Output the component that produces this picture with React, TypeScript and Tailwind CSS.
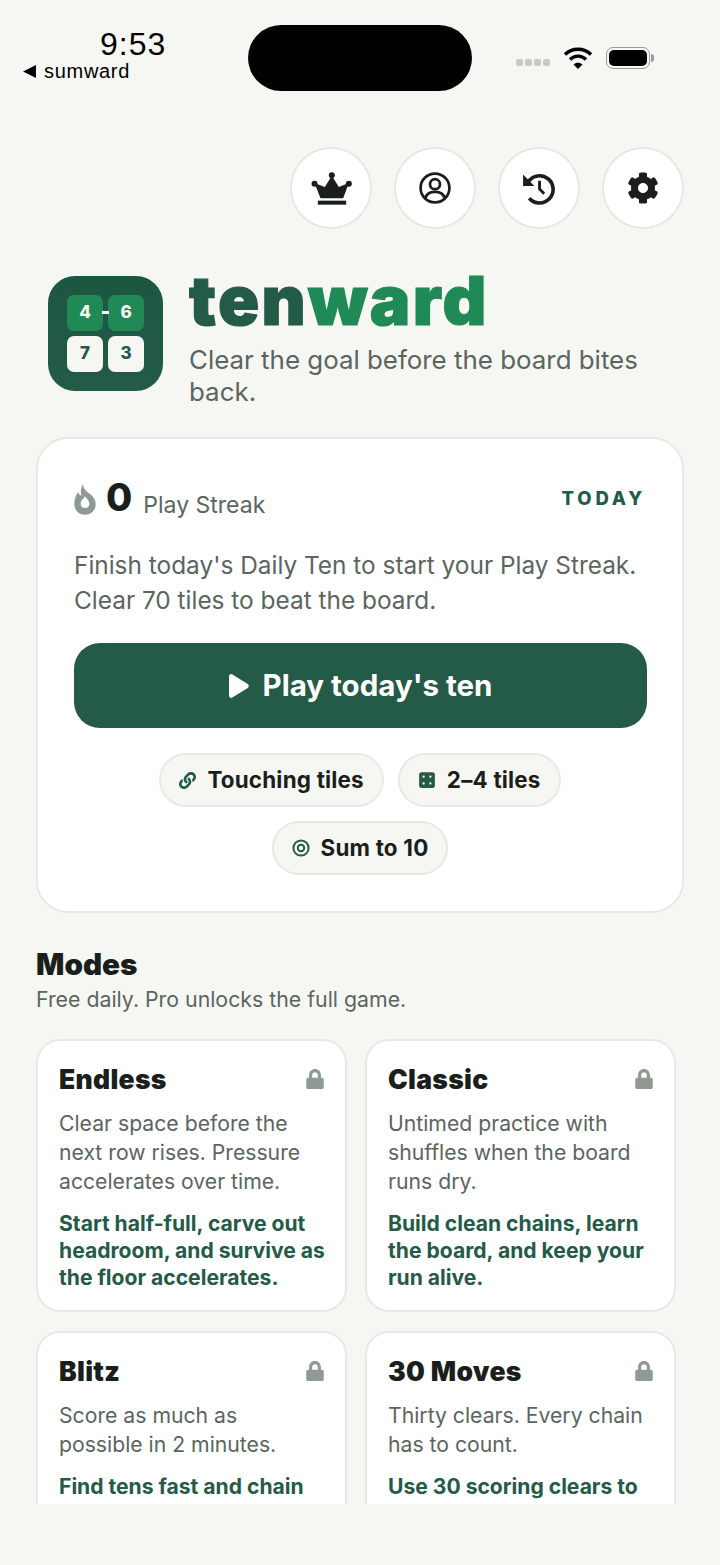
import React from "react";
import { FaCog, FaLock, FaLink, FaDiceFour } from "react-icons/fa";

const Crown = () => (
  <svg width="41" height="33" viewBox="30 33 122 99" fill="#1a1f1c">
    <circle cx="92" cy="43" r="9" />
    <circle cx="40" cy="68" r="9" />
    <circle cx="143" cy="68" r="9" />
    <path d="M92 44 L113 78 L143 66 L126 112 L58 112 L40 66 L71 78 Z" />
    <rect x="50" y="119" width="85" height="12" />
  </svg>
);
const Profile = () => (
  <svg width="32" height="32" viewBox="0 0 32 32" fill="none" stroke="#1a1f1c" strokeWidth="2.700">
    <circle cx="16" cy="16" r="14.400" />
    <circle cx="16" cy="12.200" r="5" />
    <path d="M6.500 26c1-4.500 4-6.200 9.500-6.200s8.500 1.700 9.500 6.200" />
  </svg>
);
const History = () => (
  <svg className="-ml-[2px]" width="33" height="33" viewBox="0 0 32 32" fill="none" stroke="#1a1f1c" strokeWidth="3.500">
    <path d="M6 9.500A13.200 13.200 0 1 1 7 25.500" />
    <path d="M1 2.500 L12 13.500 L1 13.500 Z" fill="#1a1f1c" stroke="none" />
    <path d="M17 8.500V16.500L21.500 21" strokeWidth="2.800" />
  </svg>
);
const Flame = () => (
  <svg width="22" height="32" viewBox="27 15 66 96" fill="#8e9a92">
    <path fillRule="evenodd" d="M55 17C52 30 62 38 75 48C86 57 92 66 92 78C92 98 78 110 60 110C42 110 28 98 28 78C28 64 32 52 40 42C42 50 45 53 49 52C47 40 47 27 55 17ZM60 55C54 64 47 68 47 78C47 86 53 90 60 90C67 90 73 86 73 78C73 68 66 64 60 55Z" />
  </svg>
);
const Target = () => (
  <svg width="18" height="18" viewBox="0 0 18 18" fill="none" stroke="#245a48">
    <circle cx="9" cy="9" r="7.600" strokeWidth="2" />
    <circle cx="9" cy="9" r="3.200" strokeWidth="2" />
  </svg>
);

const Round = ({ children }: { children: React.ReactNode }) => (
  <div className="flex h-[82px] w-[82px] items-center justify-center rounded-full border-2 border-[#e8e9e5] bg-white">
    {children}
  </div>
);
const Tile = ({ n, green }: { n: string; green?: boolean }) => (
  <div className={`flex h-[36px] w-[36px] items-center justify-center rounded-[7px] text-[17px] font-extrabold ${green ? "bg-[#208a56] text-[#f6f7f3]" : "bg-[#f6f7f3] text-[#245a48]"}`}>
    {n}
  </div>
);
const Chip = ({ icon, label }: { icon: React.ReactNode; label: string }) => (
  <div className="flex h-[54px] items-center gap-[11px] rounded-full border-2 border-[#e8e9e5] bg-[#f6f7f3] px-[18px] text-[22.400px] tracking-[0.200px] font-bold text-[#1a1f1c]">
    {icon}
    <span>{label}</span>
  </div>
);
const Mode = ({ title, desc, tip }: { title: string; desc: string[]; tip: string[] }) => (
  <div className="h-[273px] w-[311px] rounded-[24px] border-2 border-[#e8e9e5] bg-white pl-[21px] pr-[20px] pt-[20px]">
    <div className="flex h-[36px] items-center justify-between">
      <span className="text-[26.500px] tracking-[0.300px] leading-[36px] font-black text-[#1a1f1c]">{title}</span>
      <FaLock size={20} color="#8e9a92" />
    </div>
    <div className="mt-[12px] whitespace-nowrap text-[21.200px] leading-[29px] text-[#5b655f]">
      {desc.map((d) => <div key={d}>{d}</div>)}
    </div>
    <div className="mt-[14px] whitespace-nowrap text-[21.100px] leading-[27px] font-bold text-[#245a48]">
      {tip.map((d) => <div key={d}>{d}</div>)}
    </div>
  </div>
);

export default function App() {
  return (
    <div className="h-[1565px] w-[720px] overflow-hidden bg-[#f6f7f3] font-['Inter',sans-serif]">
      <div className="h-[1504px] overflow-hidden">
        {/* status bar */}
        <div className="flex h-[147px] items-start">
          <div className="w-[248px] pt-[26px] font-['Liberation_Sans',sans-serif] text-black">
            <div className="pl-[100px] text-[32px] leading-[36px] tracking-[1px]">9:53</div>
            <div className="-mt-[1px] flex items-center gap-[7px] pl-[23px] text-[20px] leading-[20px] tracking-[0.700px]">
              <svg width="14" height="13" viewBox="0 0 14 13" fill="#000"><path d="M13 0V13L0 6.500Z" /></svg>
              <span>sumward</span>
            </div>
          </div>
          <div className="mt-[25px] h-[66px] w-[224px] rounded-[33px] bg-black" />
          <div className="flex items-center pl-[44px] pt-[46px]">
            <div className="mt-[9px] flex gap-[2px]">
              {[0, 1, 2, 3].map((i) => <div key={i} className="h-[7px] w-[7px] rounded-[2px] bg-[#c8cac8]" />)}
            </div>
            <svg className="ml-[13px]" width="30" height="24" viewBox="0 0 30 24" fill="none" stroke="#000" strokeWidth="3.400">
              <path d="M2 8.500C9 1.500 21 1.500 28 8.500" />
              <path d="M7 13.500C11.500 9 18.500 9 23 13.500" />
              <path d="M15 23 L10.500 18.500C13 16 17 16 19.500 18.500Z" fill="#000" stroke="none" />
            </svg>
            <div className="ml-[13px] flex h-[22px] w-[44px] items-center rounded-[7px] border-[1.500px] border-[#9a9a9a] p-[2px]">
              <div className="h-full w-full rounded-[5px] bg-black" />
            </div>
            <div className="ml-[1px] h-[8px] w-[3px] rounded-r-full bg-[#9a9a9a]" />
          </div>
        </div>

        {/* round buttons */}
        <div className="flex justify-end gap-[22px] pr-[36px]">
          <Round><Crown /></Round>
          <Round><Profile /></Round>
          <Round><History /></Round>
          <Round><FaCog size={32} color="#1a1f1c" /></Round>
        </div>

        {/* brand */}
        <div className="mt-[47px] flex pl-[48px] pr-[70px]">
          <div className="flex h-[115px] w-[115px] shrink-0 items-center justify-center rounded-[27px] bg-gradient-to-b from-[#1c5742] to-[#245a48]">
            <div className="relative grid grid-cols-2 gap-[5px]">
              <Tile n="4" green />
              <Tile n="6" green />
              <Tile n="7" />
              <Tile n="3" />
              <div className="absolute left-[35px] top-[16px] h-[3px] w-[7px] bg-[#f6f7f3]" />
            </div>
          </div>
          <div className="ml-[26px] min-w-0">
            <div className="-mt-[16px] h-[68px] whitespace-nowrap text-[68px] leading-[80px] font-black tracking-[2.400px] text-[#245a48] [-webkit-text-stroke:1.200px_currentColor]">
              ten<span className="text-[#208a56]">ward</span>
            </div>
            <div className="mt-[16px] text-[25.900px] leading-[32px] text-[#5b655f]">
              Clear the goal before the board bites back.
            </div>
          </div>
        </div>

        {/* daily card */}
        <div className="mx-[36px] mt-[29px] h-[476px] rounded-[32px] border-2 border-[#e8e9e5] bg-white px-[36px] pt-[36px]">
          <div className="flex h-[48px] items-center justify-between">
            <div className="flex items-center">
              <Flame />
              <span className="-mt-[4px] ml-[10px] text-[38px] leading-[48px] font-extrabold text-[#1a1f1c]">0</span>
              <span className="ml-[11px] mt-[12px] text-[23px] leading-[32px] text-[#5b655f]">Play Streak</span>
            </div>
            <span className="text-[18.500px] font-extrabold tracking-[3.800px] text-[#245a48]">TODAY</span>
          </div>
          <div className="mt-[25px] whitespace-nowrap text-[24.400px] leading-[35px] text-[#5b655f]">
            <div>Finish today's Daily Ten to start your Play Streak.</div>
            <div>Clear 70 tiles to beat the board.</div>
          </div>
          <div className="mt-[25px] flex h-[85px] w-[573px] items-center justify-center gap-[14px] rounded-[26px] bg-[#245a48] text-[29.500px] font-bold text-white">
            <svg width="20" height="24" viewBox="0 0 20 24" fill="#fff"><path d="M0 2.500C0 .600 1.800-.500 3.400.400L18.700 10c1.500.900 1.500 3.100 0 4L3.400 23.600C1.800 24.500 0 23.400 0 21.500Z" /></svg>
            <span>Play today's ten</span>
          </div>
          <div className="mt-[25px] flex flex-wrap justify-center gap-x-[14px] gap-y-[14px]">
            <Chip icon={<FaLink size={17} color="#245a48" />} label="Touching tiles" />
            <Chip icon={<FaDiceFour size={18} color="#245a48" />} label="2–4 tiles" />
            <Chip icon={<Target />} label="Sum to 10" />
          </div>
        </div>

        {/* modes */}
        <div className="mx-[36px] mt-[33px]">
          <div className="text-[29.700px] leading-[36px] font-black text-[#1a1f1c]">Modes</div>
          <div className="mt-[3px] text-[21.300px] leading-[28px] text-[#5b655f]">Free daily. Pro unlocks the full game.</div>
          <div className="mt-[26px] grid w-[641px] grid-cols-[311px_311px] gap-x-[18px] gap-y-[19px]">
            <Mode title="Endless" desc={["Clear space before the", "next row rises. Pressure", "accelerates over time."]} tip={["Start half-full, carve out", "headroom, and survive as", "the floor accelerates."]} />
            <Mode title="Classic" desc={["Untimed practice with", "shuffles when the board", "runs dry."]} tip={["Build clean chains, learn", "the board, and keep your", "run alive."]} />
            <Mode title="Blitz" desc={["Score as much as", "possible in 2 minutes."]} tip={["Find tens fast and chain"]} />
            <Mode title="30 Moves" desc={["Thirty clears. Every chain", "has to count."]} tip={["Use 30 scoring clears to"]} />
          </div>
        </div>
      </div>
    </div>
  );
}
